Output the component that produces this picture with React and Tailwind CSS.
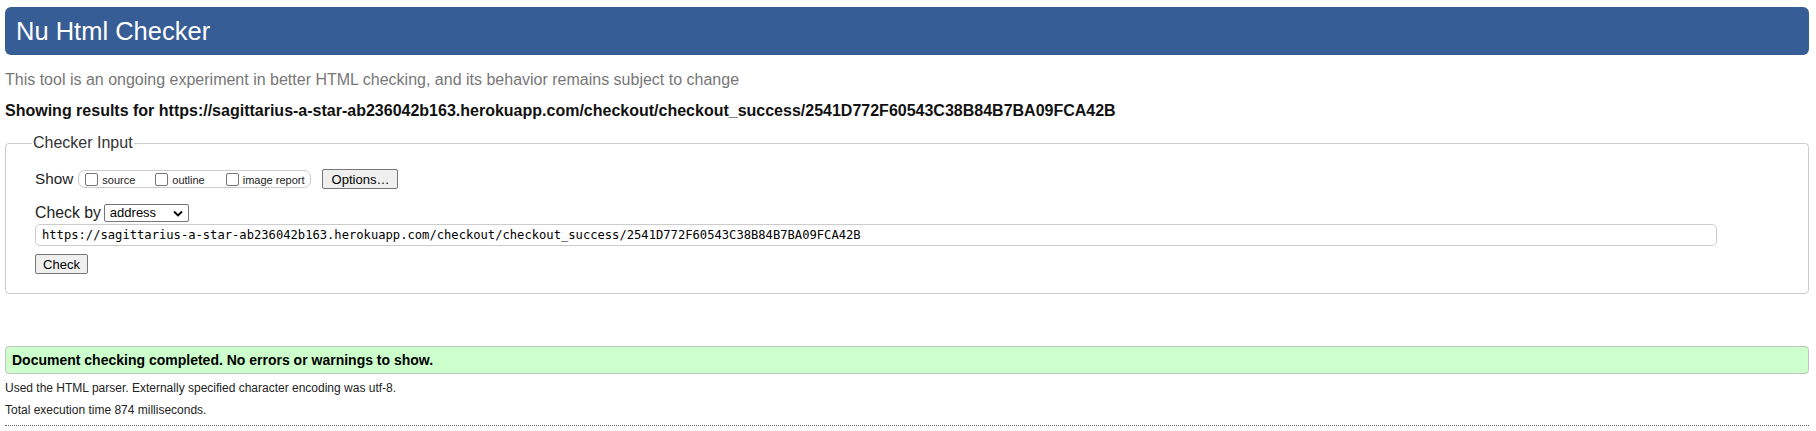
import React from "react";

const url =
  "https://sagittarius-a-star-ab236042b163.herokuapp.com/checkout/checkout_success/2541D772F60543C38B84B7BA09FCA42B";

const Box = ({ label, className }) => (
  <label className={"flex items-center " + (className || "")}>
    <span className="block w-[13px] h-[13px] border border-[#767676] rounded-[2px] bg-white" />
    <span className="ml-[4px] pt-[2px] text-[11px] leading-[12px] text-[#222]">{label}</span>
  </label>
);

const App = () => {
  return (
    <div className="min-h-screen bg-white pl-[5px] pr-[7px] pt-[7px] font-['Liberation_Sans',Arial,sans-serif] text-[#222]">
      <div className="h-[48px] bg-[#365d95] rounded-[6px] flex items-center pl-[11px] text-white text-[25.5px]">
        Nu Html Checker
      </div>

      <p className="mt-[16px] text-[16px] leading-[18px] text-[#777]">
        This tool is an ongoing experiment in better HTML checking, and its behavior remains subject to change
      </p>
      <p className="mt-[13px] text-[16px] leading-[18px] font-bold text-[#111]">
        Showing results for {url}
      </p>

      <fieldset className="mt-[14px] border border-[#ccc] rounded-[4px] pl-[29px] pt-[17px] pb-[17px]">
        <legend className="ml-[-3px] px-[1px] text-[16px] leading-[18px] text-[#333]">Checker Input</legend>

        <div className="flex items-center h-[20px]">
          <span className="text-[15.3px] text-[#222]">Show</span>
          <div className="ml-[5px] h-[18px] flex items-center border border-[#ccc] rounded-[7px] pl-[6px] pr-[6px]">
            <Box label="source" className="mr-[20px]" />
            <Box label="outline" className="mr-[21px]" />
            <Box label="image report" />
          </div>
          <button className="ml-[11px] h-[20px] w-[76px] bg-[#efefef] border border-[#767676] rounded-[2px] text-[13px] text-black">
            Options…
          </button>
        </div>

        <div className="mt-[14px] flex items-center h-[20px]">
          <span className="text-[15.8px] text-[#222]">Check by</span>
          <div className="ml-[3px] h-[18px] w-[85px] flex items-center justify-between border border-[#767676] rounded-[2px] pl-[5px] pr-[5px] text-[13px] text-black">
            <span>address</span>
            <svg width="10" height="7" viewBox="0 0 10 7" fill="none">
              <path d="M1 1.5l4 4 4-4" stroke="#000" strokeWidth="1.8" />
            </svg>
          </div>
        </div>

        <div className="mt-[1px] h-[22px] w-[1682px] border border-[#ccc] rounded-[5px] flex items-center pl-[6px] font-['DejaVu_Sans_Mono',monospace] text-[12.15px] text-black">
          {url}
        </div>

        <button className="mt-[8px] h-[20px] w-[53px] bg-[#efefef] border border-[#767676] rounded-[2px] text-[13px] text-black">
          Check
        </button>
      </fieldset>

      <div className="mt-[52px] h-[28px] bg-[#ccffcc] border border-[#c4c4c4] rounded-[4px] flex items-center pl-[6px] text-[14px] font-bold text-black">
        Document checking completed. No errors or warnings to show.
      </div>

      <p className="mt-[7px] text-[12px] leading-[14px] text-[#222]">
        Used the HTML parser. Externally specified character encoding was utf-8.
      </p>
      <p className="mt-[8px] text-[12px] leading-[14px] text-[#222]">
        Total execution time 874 milliseconds.
      </p>
      <div className="mt-[8px] border-t border-dotted border-[#666]" />
    </div>
  );
};

export default App;
